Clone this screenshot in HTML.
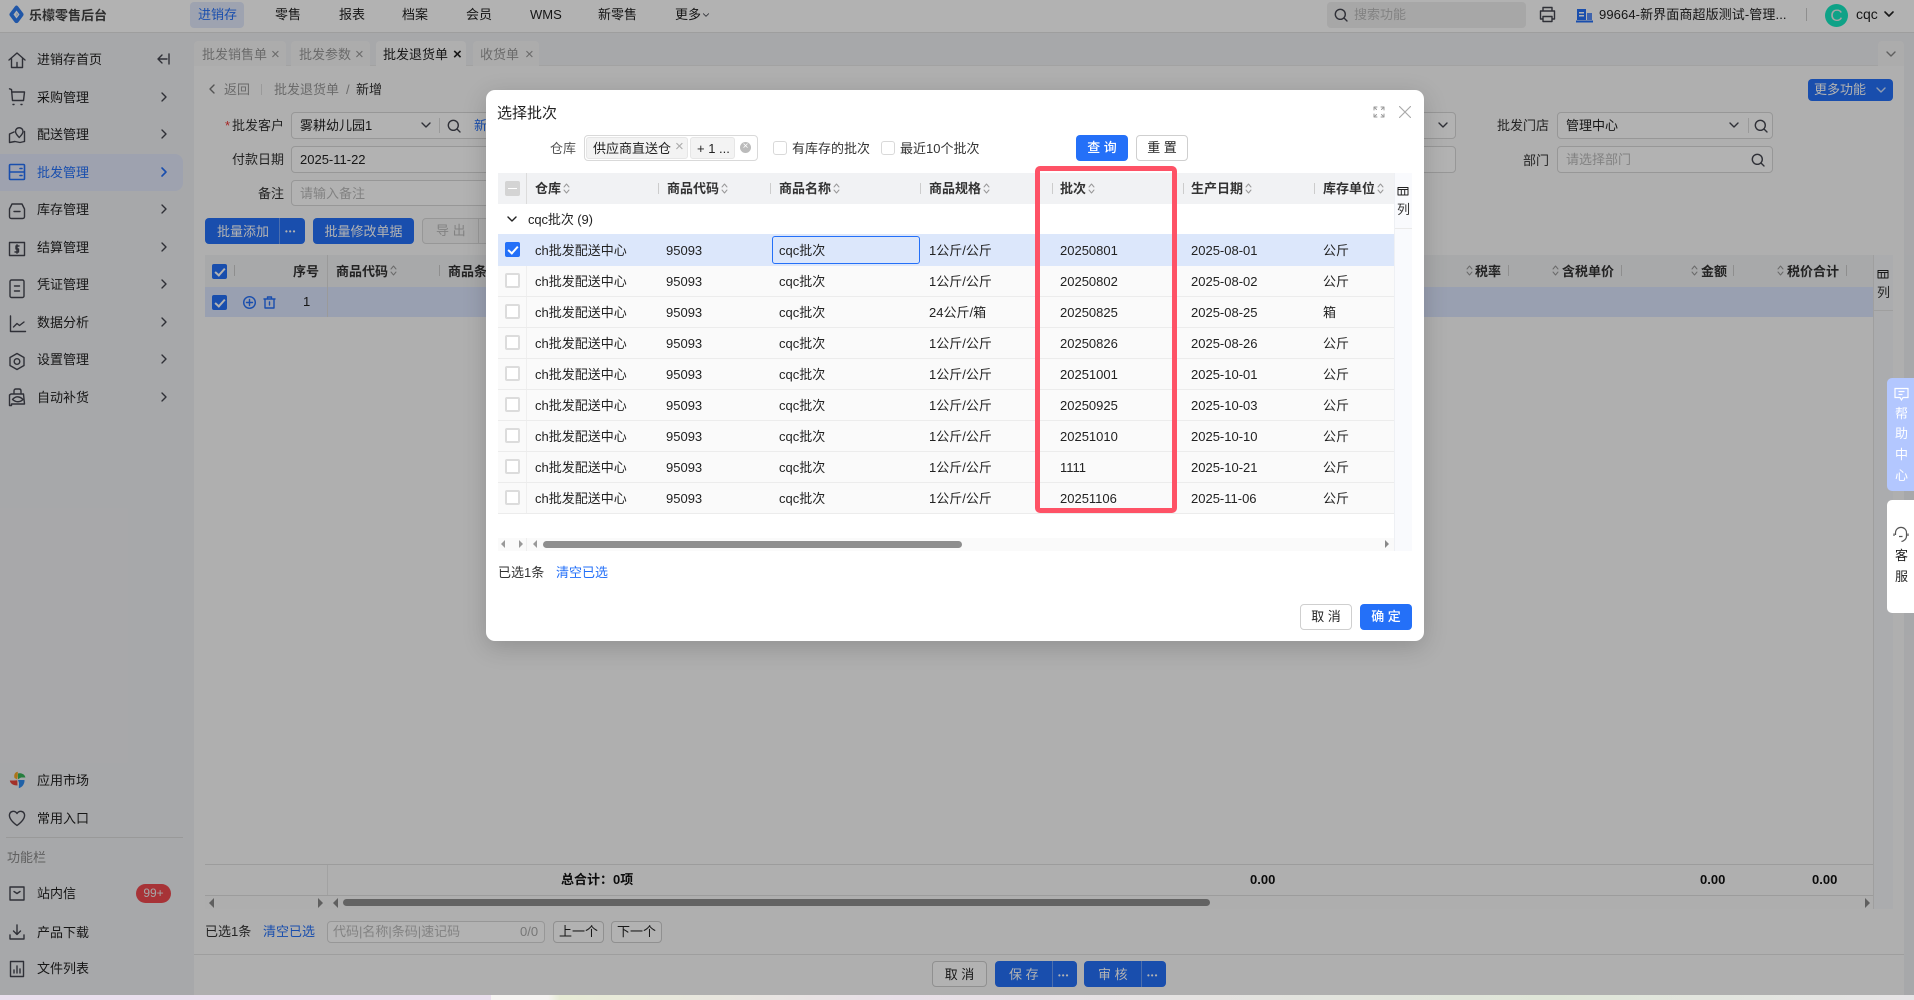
<!DOCTYPE html>
<html lang="zh"><head><meta charset="utf-8"><title>选择批次</title>
<style>
*{box-sizing:border-box}
html,body{margin:0;padding:0;width:1914px;height:1000px;overflow:hidden;background:#fff;font-family:"Liberation Sans","Noto Sans CJK SC",sans-serif;font-size:13px;color:#222}
.a,.t,svg.i{position:absolute}
.t{white-space:nowrap;line-height:20px;font-size:13px;margin-top:1px}
.b{font-weight:700}
.g{color:#999}.l{color:#333}.u{color:#2470f8}.w{color:#fff}
svg.i{fill:none;stroke:#444650;stroke-width:1.4;stroke-linecap:round;stroke-linejoin:round}
svg.s{stroke:#999;stroke-width:1}
svg.ub{stroke:#2470f8}
.inp{position:absolute;background:#fff;border:1px solid #d9d9d9;border-radius:4px}
.btn{position:absolute;border-radius:4px;text-align:center;line-height:24px;white-space:nowrap;font-size:13px}
.pri{background:#2470f8;color:#fff;line-height:26px}
.def{background:#fff;border:1px solid #cfcfcf;color:#222}
.cb{position:absolute;width:15px;height:15px;border:2px solid #dcdcdc;border-radius:2px;background:#fff}
.cc{position:absolute;width:15px;height:15px;border-radius:2px;background:#2470f8}
.cc:after{content:"";position:absolute;left:5px;top:1.5px;width:4px;height:8px;border:solid #fff;border-width:0 2px 2px 0;transform:rotate(42deg)}
.sep{position:absolute;width:1px;height:11px;background:#ccc}
.row{position:absolute;left:498px;width:896px;background:#fafafa;border-bottom:1px solid #ececec}
.row .t{top:5px}
.row .cb,.row .cc{left:7px;top:7px}
.row i{position:absolute;left:28px;top:0;bottom:0;width:1px;background:#efefef}
.tab{position:absolute;top:41px;height:25px;background:#f6f6f6;border-radius:4px 4px 0 0}
#mask{position:absolute;left:0;top:0;width:1914px;height:995px;background:rgba(0,0,0,.3);z-index:2}
#bg{position:absolute;left:0;top:0;width:1914px;height:995px;background:#fbfbfb;z-index:1;overflow:hidden}
#dlg{position:absolute;left:0;top:0;z-index:3}
</style></head><body>
<svg width="0" height="0" style="position:absolute"><defs>
<symbol id="so" viewBox="0 0 7 13"><path d="M1 5L3.5 2L6 5M1 8L3.5 11L6 8"/></symbol>
<symbol id="ar" viewBox="0 0 8 12"><path d="M2 2L6 6L2 10"/></symbol>
<symbol id="dn" viewBox="0 0 12 8"><path d="M2 2L6 6L10 2"/></symbol>
<symbol id="se" viewBox="0 0 14 14"><circle cx="6.3" cy="6.3" r="5"/><path d="M10 10L13 13"/></symbol>
<symbol id="co" viewBox="0 0 12 10"><path d="M1 1.5H11V9H1ZM1 3.5H11M4.3 3.5V9M7.7 3.5V9" /></symbol>
</defs></svg>

<div id="bg">
<!-- top bar -->
<div class="a" style="left:0;top:0;width:1914px;height:33px;background:#fff;border-bottom:1px solid #e2e2e2"></div>
<svg class="a" style="left:9px;top:5px" width="15" height="19" viewBox="0 0 15 19"><path d="M7.500 .5C8.500 .5 9 1.500 9.500 2L14 8C14.800 9 14.800 10 14 11L9.500 17C8.500 18.500 6.500 18.500 5.500 17L1 11C.2 10 .2 9 1 8L5.500 2C6 1.500 6.500 .5 7.500 .5Z" fill="#2f7cf0"/><path d="M7.500 5.500L10.500 9.500L7.500 13.500L4.500 9.500Z" fill="#fff"/><path d="M7.500 7.500L9 9.500L7.500 11.500Z" fill="#9ec4ff"/></svg>
<div class="t b" style="left:29px;top:5px;color:#444">乐檬零售后台</div>
<div class="a" style="left:190px;top:2px;width:54px;height:26px;background:#e3eafd;border-radius:4px"></div>
<div class="t u" style="left:198px;top:4px">进销存</div>
<div class="t" style="left:275px;top:4px">零售</div>
<div class="t" style="left:339px;top:4px">报表</div>
<div class="t" style="left:402px;top:4px">档案</div>
<div class="t" style="left:466px;top:4px">会员</div>
<div class="t" style="left:530px;top:4px">WMS</div>
<div class="t" style="left:598px;top:4px">新零售</div>
<div class="t" style="left:675px;top:4px">更多</div>
<svg class="i" style="left:702px;top:12px;stroke-width:1.2" width="8" height="6"><use href="#dn"/></svg>
<div class="a" style="left:1327px;top:2px;width:199px;height:26px;background:#f0f0f0;border-radius:4px"></div>
<svg class="i" style="left:1334px;top:8px" width="14" height="14"><use href="#se"/></svg>
<div class="t g" style="left:1354px;top:4px;color:#bbb">搜索功能</div>
<svg class="i" style="left:1539px;top:6px" width="17" height="17" viewBox="0 0 17 17"><path d="M4 5V1.5H13V5M4 13H1.5V5H15.500V13H13M4 10.500H13V15.500H4Z"/></svg>
<svg class="a" style="left:1576px;top:8px" width="17" height="15" viewBox="0 0 17 15"><rect x="1" y="1" width="9" height="11" fill="#2470f8"/><rect x="11" y="5" width="5" height="7" fill="#5a8ff8"/><rect x="0" y="12.500" width="17" height="2" fill="#2470f8"/><rect x="3" y="4" width="5" height="1.500" fill="#fff"/><rect x="3" y="7" width="5" height="1.500" fill="#fff"/></svg>
<div class="t" style="left:1599px;top:4px;letter-spacing:.1px">99664-新界面商超版测试-管理...</div>
<div class="a" style="left:1806px;top:8px;width:1px;height:13px;background:#ccc"></div>
<div class="a" style="left:1825px;top:4px;width:23px;height:23px;border-radius:50%;background:#16e8c2;color:#eee;text-align:center;line-height:23px;font-size:17px">C</div>
<div class="t" style="left:1856px;top:3px;font-size:14px">cqc</div>
<svg class="i" style="left:1883px;top:10px;stroke:#222;stroke-width:1.6" width="12" height="8"><use href="#dn"/></svg>

<!-- sidebar -->
<div class="a" style="left:0;top:33px;width:194px;height:962px;background:#f0f1f4"></div>
<div class="a" style="left:0;top:154px;width:183px;height:37px;background:#e2e9fb;border-radius:0 8px 8px 0"></div>
<div class="t" style="left:37px;top:49px">进销存首页</div>
<div class="t" style="left:37px;top:87px">采购管理</div>
<div class="t" style="left:37px;top:124px">配送管理</div>
<div class="t u" style="left:37px;top:162px">批发管理</div>
<div class="t" style="left:37px;top:199px">库存管理</div>
<div class="t" style="left:37px;top:237px">结算管理</div>
<div class="t" style="left:37px;top:274px">凭证管理</div>
<div class="t" style="left:37px;top:312px">数据分析</div>
<div class="t" style="left:37px;top:349px">设置管理</div>
<div class="t" style="left:37px;top:387px">自动补货</div>
<svg class="i" style="left:8px;top:51px" width="18" height="18" viewBox="0 0 18 18"><path d="M1 9L9 2L17 9M3.500 7.500V16.500H14.500V7.500M9 11.500V16.500"/></svg>
<svg class="i" style="left:8px;top:88px" width="18" height="18" viewBox="0 0 18 18"><path d="M1.500 .8L3.500 1.500L4.500 12.500H15.500L16.500 4H4"/><path d="M5 16.500H6M13 16.500H14"/></svg>
<svg class="i" style="left:8px;top:126px" width="18" height="18" viewBox="0 0 18 18"><path d="M6 6L1.500 8V16.500L7 15.500L12 16.500L16.500 15.500V5.500M7.500 5.500C7.500 .5 15 .5 15 5.500C15 8 12.500 10 11.200 11.500C10 10 7.500 8 7.500 5.500Z"/></svg>
<svg class="i ub" style="left:8px;top:163px;stroke-width:1.600" width="18" height="18" viewBox="0 0 18 18"><path d="M2.500 1.500H15.500Q16.500 1.500 16.500 2.500V15.500Q16.500 16.500 15.500 16.500H2.500Q1.500 16.500 1.500 15.500V2.500Q1.500 1.500 2.500 1.500ZM1.500 9H16.500M12 5.500H14M12 12.500H14"/></svg>
<svg class="i" style="left:8px;top:202px" width="18" height="18" viewBox="0 0 18 18"><path d="M4 2H14L16.500 7V14.500Q16.500 16.500 14.500 16.500H3.500Q1.500 16.500 1.500 14.500V7ZM6 9.500H12"/></svg>
<svg class="i" style="left:8px;top:240px" width="18" height="18" viewBox="0 0 18 18"><path d="M1.500 2.500H16.500V15.500H1.500ZM11 6H8V9H10.500V12H7M9 4.800V13.200"/></svg>
<svg class="i" style="left:8px;top:279px" width="18" height="20" viewBox="0 0 18 20"><rect x="2" y="1" width="14" height="17.500" rx="1.500"/><path d="M6.500 7H11.500M6.500 12H11.500"/></svg>
<svg class="i" style="left:9px;top:315px" width="18" height="18" viewBox="0 0 18 18"><path d="M1.500 1V16.500H16.500M4.500 12L8 8.500L10.500 10.500L15 7"/></svg>
<svg class="i" style="left:8px;top:352px" width="18" height="19" viewBox="0 0 18 19"><path d="M9 1.500L16 5.500V13.500L9 17.500L2 13.500V5.500Z"/><circle cx="9" cy="9.500" r="2.800"/></svg>
<svg class="i" style="left:8px;top:388px" width="18" height="19" viewBox="0 0 18 19"><path d="M3 6H15.500L16.500 16H3.500V17.500H1.500V7ZM6 6V3Q6 1 8 1H11Q13 1 13 3V6M4.500 11.500C8 7.500 12 8.500 15 11.500C12 14.500 8 14.500 4.500 11.500Z"/></svg>
<svg class="i" style="left:156px;top:53px" width="14" height="12" viewBox="0 0 14 12"><path d="M13 1V11M11 6H2M6 2L2 6L6 10"/></svg>
<svg class="i" style="left:160px;top:91px" width="8" height="12"><use href="#ar"/></svg>
<svg class="i" style="left:160px;top:128px" width="8" height="12"><use href="#ar"/></svg>
<svg class="i ub" style="left:160px;top:166px;stroke-width:1.6" width="8" height="12"><use href="#ar"/></svg>
<svg class="i" style="left:160px;top:203px" width="8" height="12"><use href="#ar"/></svg>
<svg class="i" style="left:160px;top:241px" width="8" height="12"><use href="#ar"/></svg>
<svg class="i" style="left:160px;top:278px" width="8" height="12"><use href="#ar"/></svg>
<svg class="i" style="left:160px;top:316px" width="8" height="12"><use href="#ar"/></svg>
<svg class="i" style="left:160px;top:353px" width="8" height="12"><use href="#ar"/></svg>
<svg class="i" style="left:160px;top:391px" width="8" height="12"><use href="#ar"/></svg>

<div class="t" style="left:37px;top:770px">应用市场</div>
<div class="t" style="left:37px;top:808px">常用入口</div>
<div class="a" style="left:6px;top:837px;width:177px;height:1px;background:#dcdcdc"></div>
<div class="t" style="left:7px;top:847px;color:#888">功能栏</div>
<div class="t" style="left:37px;top:883px">站内信</div>
<div class="t" style="left:37px;top:922px">产品下载</div>
<div class="t" style="left:37px;top:958px">文件列表</div>
<svg class="a" style="left:9px;top:771px" width="17" height="18" viewBox="0 0 17 18"><path d="M8.200 8.500L5.500 7C4.500 4 6 1 8.800 .8L8.800 5Z" fill="#f5a623"/><path d="M9 8.300V2.500C12 1.800 15.800 3 16.400 6.500L12 6.500Z" fill="#35b558"/><path d="M9 9H15.500C15.800 13 13 16.500 9.800 17.200L10 12Z" fill="#2e8cf0"/><path d="M8.300 9.300L8.500 14.500C5 14.500 1.300 13 .8 9.500L5 9.500Z" fill="#e8453c"/></svg>
<svg class="i" style="left:8px;top:809px" width="18" height="18" viewBox="0 0 18 18"><path d="M9 16.500C3 12 1 8.500 1.500 5.500C2.500 1.500 7 1.500 9 4.500C11 1.500 15.500 1.500 16.500 5.500C17 8.500 15 12 9 16.500Z"/></svg>
<svg class="i" style="left:8px;top:884px" width="18" height="18" viewBox="0 0 18 18"><path d="M2 3H16V16H2ZM6 7.500L9 9.500L12 7.500"/></svg>
<svg class="i" style="left:8px;top:923px" width="18" height="18" viewBox="0 0 18 18"><path d="M9 2V11M5.500 8L9 11.500L12.500 8M2 12V16H16V12"/></svg>
<svg class="i" style="left:8px;top:960px" width="18" height="18" viewBox="0 0 18 18"><path d="M2.500 1.500H15.500V16.500H2.500ZM6 13V10M9 13V6M12 13V9"/></svg>
<div class="a" style="left:136px;top:884px;width:35px;height:19px;border-radius:10px;background:#f04a50;color:#eee;text-align:center;line-height:19px;font-size:12px">99+</div>

<!-- tabs -->
<div class="a" style="left:194px;top:33px;width:1720px;height:33px;background:#f0f1f4"></div>
<div class="a" style="left:1904px;top:66px;width:10px;height:929px;background:#f0f1f4"></div>
<div class="a" style="left:194px;top:65px;width:1710px;height:1px;background:#e8e8e8"></div>
<div class="tab" style="left:194px;width:92px"></div>
<div class="tab" style="left:291px;width:79px"></div>
<div class="tab" style="left:376px;width:90px;background:#fbfbfb;height:26px"></div>
<div class="tab" style="left:473px;width:66px"></div>
<div class="tab" style="left:1878px;width:26px"></div>
<div class="t" style="left:202px;top:44px;color:#999">批发销售单</div>
<div class="t" style="left:271px;top:44px;color:#999;font-size:15px">×</div>
<div class="t" style="left:299px;top:44px;color:#999">批发参数</div>
<div class="t" style="left:355px;top:44px;color:#999;font-size:15px">×</div>
<div class="t" style="left:383px;top:44px">批发退货单</div>
<div class="t b" style="left:453px;top:44px;font-size:15px">×</div>
<div class="t" style="left:480px;top:44px;color:#999">收货单</div>
<div class="t" style="left:525px;top:44px;color:#999;font-size:15px">×</div>
<svg class="i" style="left:1885px;top:50px;stroke:#888" width="12" height="8"><use href="#dn"/></svg>

<!-- breadcrumb & form -->
<svg class="i" style="left:208px;top:83px;stroke:#777" width="8" height="12" viewBox="0 0 8 12"><path d="M6 2L2 6L6 10"/></svg>
<div class="t g" style="left:224px;top:79px">返回</div>
<div class="a" style="left:261px;top:84px;width:1px;height:11px;background:#ddd"></div>
<div class="t g" style="left:274px;top:79px">批发退货单</div>
<div class="t g" style="left:346px;top:79px">/</div>
<div class="t l" style="left:356px;top:79px">新增</div>
<div class="t" style="left:225px;top:115px;color:#e33">*</div>
<div class="t l" style="left:232px;top:115px">批发客户</div>
<div class="t l" style="left:232px;top:149px">付款日期</div>
<div class="t l" style="left:258px;top:183px">备注</div>
<div class="inp" style="left:291px;top:112px;width:220px;height:27px"></div>
<div class="t" style="left:300px;top:115px">雾耕幼儿园1</div>
<svg class="i" style="left:420px;top:121px" width="12" height="8"><use href="#dn"/></svg>
<div class="a" style="left:439px;top:118px;width:1px;height:15px;background:#ddd"></div>
<svg class="i" style="left:447px;top:119px" width="14" height="14"><use href="#se"/></svg>
<div class="t u" style="left:474px;top:115px">新增</div>
<div class="inp" style="left:291px;top:146px;width:1165px;height:27px"></div>
<div class="t" style="left:300px;top:149px">2025-11-22</div>
<div class="inp" style="left:291px;top:180px;width:300px;height:26px"></div>
<div class="t" style="left:300px;top:183px;color:#bbb">请输入备注</div>
<div class="inp" style="left:1000px;top:112px;width:456px;height:27px"></div>
<svg class="i" style="left:1437px;top:121px" width="12" height="8"><use href="#dn"/></svg>

<div class="t l" style="left:1497px;top:115px">批发门店</div>
<div class="t l" style="left:1523px;top:150px">部门</div>
<div class="inp" style="left:1557px;top:112px;width:216px;height:27px"></div>
<div class="t" style="left:1566px;top:115px">管理中心</div>
<svg class="i" style="left:1728px;top:121px" width="12" height="8"><use href="#dn"/></svg>
<div class="a" style="left:1748px;top:118px;width:1px;height:15px;background:#ddd"></div>
<svg class="i" style="left:1754px;top:119px" width="14" height="14"><use href="#se"/></svg>
<div class="inp" style="left:1557px;top:146px;width:216px;height:27px"></div>
<div class="t" style="left:1566px;top:149px;color:#bbb">请选择部门</div>
<svg class="i" style="left:1751px;top:153px" width="14" height="14"><use href="#se"/></svg>
<div class="btn pri" style="left:1808px;top:79px;width:85px;height:22px;line-height:22px;text-align:left;padding-left:6px">更多功能</div>
<svg class="i" style="left:1875px;top:86px;stroke:#cfe0ff" width="12" height="8"><use href="#dn"/></svg>

<!-- toolbar -->
<div class="btn pri" style="left:205px;top:218px;width:100px;height:26px;text-align:left;padding-left:12px;line-height:27px">批量添加</div>
<div class="a" style="left:279px;top:218px;width:1px;height:26px;background:#6d9ffa"></div>
<div class="t w" style="left:285px;top:228px;line-height:6px;font-size:8px;letter-spacing:1px">•••</div>
<div class="btn pri" style="left:313px;top:218px;width:101px;height:26px;line-height:27px">批量修改单据</div>
<div class="btn" style="left:422px;top:218px;width:70px;height:26px;border:1px solid #d9d9d9;background:#f5f5f5;color:#bbb;text-align:left;padding-left:13px">导 出</div>
<div class="a" style="left:478px;top:218px;width:1px;height:26px;background:#d9d9d9"></div>

<!-- main table -->
<div class="a" style="left:205px;top:255px;width:1668px;height:32px;background:#f1f2f4"></div>
<div class="a" style="left:205px;top:287px;width:1668px;height:30px;background:#dce5fe"></div>
<div class="a" style="left:327px;top:255px;width:1px;height:62px;background:#ddd"></div>
<div class="cc" style="left:212px;top:264px"></div>
<div class="sep" style="left:234px;top:265px"></div>
<div class="t b l" style="left:293px;top:261px">序号</div>
<div class="t b l" style="left:336px;top:261px">商品代码</div>
<svg class="i s" style="left:390px;top:264px" width="7" height="13"><use href="#so"/></svg>
<div class="sep" style="left:439px;top:265px"></div>
<div class="t b l" style="left:448px;top:261px">商品条码</div>
<div class="cc" style="left:212px;top:295px"></div>
<svg class="i ub" style="left:243px;top:296px" width="13" height="13" viewBox="0 0 13 13"><circle cx="6.500" cy="6.500" r="5.800"/><path d="M6.500 3.500V9.500M3.500 6.500H9.500"/></svg>
<svg class="i ub" style="left:263px;top:296px" width="13" height="13" viewBox="0 0 13 13"><path d="M1 3H12M4.500 3V1H8.500V3M2 3V12H11V3M6.500 6V9"/></svg>
<div class="t" style="left:303px;top:291px">1</div>
<svg class="i s" style="left:1466px;top:264px" width="7" height="13"><use href="#so"/></svg>
<div class="t b l" style="left:1475px;top:261px">税率</div>
<div class="sep" style="left:1508px;top:265px"></div>
<svg class="i s" style="left:1552px;top:264px" width="7" height="13"><use href="#so"/></svg>
<div class="t b l" style="left:1562px;top:261px">含税单价</div>
<div class="sep" style="left:1621px;top:265px"></div>
<svg class="i s" style="left:1691px;top:264px" width="7" height="13"><use href="#so"/></svg>
<div class="t b l" style="left:1701px;top:261px">金额</div>
<div class="sep" style="left:1733px;top:265px"></div>
<svg class="i s" style="left:1777px;top:264px" width="7" height="13"><use href="#so"/></svg>
<div class="t b l" style="left:1787px;top:261px">税价合计</div>
<div class="sep" style="left:1846px;top:265px"></div>
<div class="a" style="left:1873px;top:255px;width:20px;height:654px;background:#f5f6f9;border-left:1px solid #e4e4e4"></div>
<svg class="i" style="left:1877px;top:269px;stroke:#222;stroke-width:1" width="12" height="10"><use href="#co"/></svg>
<div class="t l" style="left:1877px;top:282px">列</div>
<div class="a" style="left:1874px;top:310px;width:19px;height:1px;background:#e4e4e4"></div>
<!-- summary -->
<div class="a" style="left:205px;top:864px;width:1668px;height:1px;background:#e0e0e0"></div>
<div class="a" style="left:327px;top:865px;width:1px;height:44px;background:#e8e8e8"></div>
<div class="a" style="left:205px;top:895px;width:1668px;height:1px;background:#e0e0e0"></div>
<div class="t b" style="left:561px;top:869px;color:#111">总合计：0项</div>
<div class="t b" style="left:1250px;top:869px;color:#111">0.00</div>
<div class="t b" style="left:1700px;top:869px;color:#111">0.00</div>
<div class="t b" style="left:1812px;top:869px;color:#111">0.00</div>
<div class="a" style="left:205px;top:896px;width:1668px;height:13px;background:#f9f9f9"></div>
<div class="a" style="left:343px;top:899px;width:867px;height:7px;border-radius:4px;background:#8f8f8f"></div>
<svg class="a" style="left:209px;top:898px" width="6" height="10"><path d="M5 0V10L0 5Z" fill="#888"/></svg>
<svg class="a" style="left:318px;top:898px" width="6" height="10"><path d="M0 0V10L5 5Z" fill="#888"/></svg>
<svg class="a" style="left:333px;top:898px" width="6" height="10"><path d="M5 0V10L0 5Z" fill="#888"/></svg>
<svg class="a" style="left:1865px;top:898px" width="6" height="10"><path d="M0 0V10L5 5Z" fill="#888"/></svg>
<!-- bottom -->
<div class="t l" style="left:205px;top:921px">已选1条</div>
<div class="t u" style="left:263px;top:921px">清空已选</div>
<div class="inp" style="left:327px;top:921px;width:218px;height:22px"></div>
<div class="t" style="left:333px;top:921px;color:#bbb">代码|名称|条码|速记码</div>
<div class="t" style="left:520px;top:921px;color:#aaa">0/0</div>
<div class="btn def" style="left:553px;top:921px;width:51px;height:22px;line-height:20px">上一个</div>
<div class="btn def" style="left:611px;top:921px;width:51px;height:22px;line-height:20px">下一个</div>
<div class="a" style="left:194px;top:954px;width:1710px;height:1px;background:#e2e2e2"></div>
<div class="btn def" style="left:932px;top:961px;width:55px;height:26px;line-height:26px">取 消</div>
<div class="btn pri" style="left:995px;top:961px;width:82px;height:26px;text-align:left;padding-left:14px;line-height:27px">保 存</div>
<div class="a" style="left:1052px;top:961px;width:1px;height:26px;background:#6d9ffa"></div>
<div class="t w" style="left:1058px;top:972px;line-height:6px;font-size:8px;letter-spacing:1px">•••</div>
<div class="btn pri" style="left:1084px;top:961px;width:82px;height:26px;text-align:left;padding-left:14px;line-height:27px">审 核</div>
<div class="a" style="left:1141px;top:961px;width:1px;height:26px;background:#6d9ffa"></div>
<div class="t w" style="left:1147px;top:972px;line-height:6px;font-size:8px;letter-spacing:1px">•••</div>
</div>

<div id="mask"></div>
<div class="a" style="left:0;top:995px;width:1914px;height:5px;background:linear-gradient(90deg,#eadfee 0,#eadfee 491px,#f6f4f2 491px,#f6f4f2 548px,#e8ecd6 560px,#e8dfe8 900px,#dfe6d8 1550px,#e6e4e6 1914px)"></div>

<div id="dlg">
<div class="a" style="left:486px;top:90px;width:938px;height:551px;background:#fff;border-radius:9px;box-shadow:0 6px 24px rgba(0,0,0,.18)"></div>
<div class="t" style="left:497px;top:103px;font-size:15px">选择批次</div>
<svg class="i" style="left:1373px;top:106px;stroke:#999;stroke-width:1" width="12" height="12" viewBox="0 0 12 12"><path d="M1 4V1H4M8 1H11V4M11 8V11H8M4 11H1V8M1 1L3.500 3.500M11 1L8.500 3.500M11 11L8.500 8.500M1 11L3.500 8.500"/></svg>
<svg class="i" style="left:1399px;top:106px;stroke:#aaa;stroke-width:1.2" width="12" height="12" viewBox="0 0 12 12"><path d="M.5 .5L11.500 11.500M11.500 .5L.5 11.500"/></svg>
<!-- filter -->
<div class="t" style="left:550px;top:138px;color:#555">仓库</div>
<div class="inp" style="left:584px;top:135px;width:174px;height:26px"></div>
<div class="a" style="left:586px;top:137px;width:102px;height:22px;background:#f3f3f3;border:1px solid #e6e6e6;border-radius:3px"></div>
<div class="t" style="left:593px;top:138px">供应商直送仓</div>
<div class="t" style="left:675px;top:136px;color:#aaa;font-size:15px">×</div>
<div class="a" style="left:690px;top:137px;width:45px;height:22px;background:#f3f3f3;border:1px solid #e6e6e6;border-radius:3px"></div>
<div class="t" style="left:697px;top:138px">+ 1 ...</div>
<div class="a" style="left:740px;top:142px;width:11px;height:11px;border-radius:50%;background:#bbb;color:#fff;font-size:10px;line-height:10px;text-align:center">×</div>
<div class="a" style="left:773px;top:141px;width:14px;height:14px;border:1px solid #d9d9d9;border-radius:3px"></div>
<div class="t" style="left:792px;top:138px;color:#333">有库存的批次</div>
<div class="a" style="left:881px;top:141px;width:14px;height:14px;border:1px solid #d9d9d9;border-radius:3px"></div>
<div class="t" style="left:900px;top:138px;color:#333">最近10个批次</div>
<div class="btn pri" style="left:1076px;top:135px;width:52px;height:26px;font-weight:500">查 询</div>
<div class="btn def" style="left:1136px;top:135px;width:52px;height:26px">重 置</div>
<!-- table header -->
<div class="a" style="left:498px;top:173px;width:896px;height:31px;background:#f1f2f4"></div>
<div class="a" style="left:526px;top:173px;width:1px;height:31px;background:#dcdcdc"></div>
<div class="a" style="left:505px;top:181px;width:15px;height:15px;border-radius:2px;background:#d4d4d4"><div class="a" style="left:3px;top:7px;width:9px;height:1px;background:#fff"></div></div>
<div class="t b l" style="left:535px;top:178px">仓库</div><svg class="i s" style="left:563px;top:182px" width="7" height="13"><use href="#so"/></svg>
<div class="sep" style="left:658px;top:183px"></div>
<div class="t b l" style="left:667px;top:178px">商品代码</div><svg class="i s" style="left:721px;top:182px" width="7" height="13"><use href="#so"/></svg>
<div class="sep" style="left:770px;top:183px"></div>
<div class="t b l" style="left:779px;top:178px">商品名称</div><svg class="i s" style="left:833px;top:182px" width="7" height="13"><use href="#so"/></svg>
<div class="sep" style="left:920px;top:183px"></div>
<div class="t b l" style="left:929px;top:178px">商品规格</div><svg class="i s" style="left:983px;top:182px" width="7" height="13"><use href="#so"/></svg>
<div class="sep" style="left:1052px;top:183px"></div>
<div class="t b l" style="left:1060px;top:178px">批次</div><svg class="i s" style="left:1088px;top:182px" width="7" height="13"><use href="#so"/></svg>
<div class="sep" style="left:1183px;top:183px"></div>
<div class="t b l" style="left:1191px;top:178px">生产日期</div><svg class="i s" style="left:1245px;top:182px" width="7" height="13"><use href="#so"/></svg>
<div class="sep" style="left:1314px;top:183px"></div>
<div class="t b l" style="left:1323px;top:178px">库存单位</div><svg class="i s" style="left:1377px;top:182px" width="7" height="13"><use href="#so"/></svg>
<!-- column strip -->
<div class="a" style="left:1394px;top:173px;width:18px;height:378px;background:#f9fafd;border-left:1px solid #eef0f4"></div>
<svg class="i" style="left:1397px;top:186px;stroke:#222;stroke-width:1" width="12" height="10"><use href="#co"/></svg>
<div class="t l" style="left:1397px;top:199px">列</div>
<div class="a" style="left:1395px;top:228px;width:17px;height:1px;background:#eaeaea"></div>
<!-- group -->
<svg class="i" style="left:506px;top:215px;stroke:#222" width="12" height="8"><use href="#dn"/></svg>
<div class="t" style="left:528px;top:209px;letter-spacing:-.1px">cqc批次 (9)</div>
<!-- rows -->
<div class="row" style="top:234px;height:32px;background:#dce7fb;border-bottom:0"><div class="cc" style="top:8px"></div><span class="t" style="left:37px;top:6px">ch批发配送中心</span><span class="t" style="left:168px;top:6px">95093</span><span class="t" style="left:431px;top:6px">1公斤/公斤</span><span class="t" style="left:562px;top:6px">20250801</span><span class="t" style="left:693px;top:6px">2025-08-01</span><span class="t" style="left:825px;top:6px">公斤</span></div>
<div class="a" style="left:772px;top:236px;width:148px;height:28px;border:1px solid #2470f8;border-radius:3px"></div>
<div class="t" style="left:779px;top:240px">cqc批次</div>
<div class="row" style="top:266px;height:31px"><i></i><div class="cb"></div><span class="t" style="left:37px">ch批发配送中心</span><span class="t" style="left:168px">95093</span><span class="t" style="left:281px">cqc批次</span><span class="t" style="left:431px">1公斤/公斤</span><span class="t" style="left:562px">20250802</span><span class="t" style="left:693px">2025-08-02</span><span class="t" style="left:825px">公斤</span></div>
<div class="row" style="top:297px;height:31px"><i></i><div class="cb"></div><span class="t" style="left:37px">ch批发配送中心</span><span class="t" style="left:168px">95093</span><span class="t" style="left:281px">cqc批次</span><span class="t" style="left:431px">24公斤/箱</span><span class="t" style="left:562px">20250825</span><span class="t" style="left:693px">2025-08-25</span><span class="t" style="left:825px">箱</span></div>
<div class="row" style="top:328px;height:31px"><i></i><div class="cb"></div><span class="t" style="left:37px">ch批发配送中心</span><span class="t" style="left:168px">95093</span><span class="t" style="left:281px">cqc批次</span><span class="t" style="left:431px">1公斤/公斤</span><span class="t" style="left:562px">20250826</span><span class="t" style="left:693px">2025-08-26</span><span class="t" style="left:825px">公斤</span></div>
<div class="row" style="top:359px;height:31px"><i></i><div class="cb"></div><span class="t" style="left:37px">ch批发配送中心</span><span class="t" style="left:168px">95093</span><span class="t" style="left:281px">cqc批次</span><span class="t" style="left:431px">1公斤/公斤</span><span class="t" style="left:562px">20251001</span><span class="t" style="left:693px">2025-10-01</span><span class="t" style="left:825px">公斤</span></div>
<div class="row" style="top:390px;height:31px"><i></i><div class="cb"></div><span class="t" style="left:37px">ch批发配送中心</span><span class="t" style="left:168px">95093</span><span class="t" style="left:281px">cqc批次</span><span class="t" style="left:431px">1公斤/公斤</span><span class="t" style="left:562px">20250925</span><span class="t" style="left:693px">2025-10-03</span><span class="t" style="left:825px">公斤</span></div>
<div class="row" style="top:421px;height:31px"><i></i><div class="cb"></div><span class="t" style="left:37px">ch批发配送中心</span><span class="t" style="left:168px">95093</span><span class="t" style="left:281px">cqc批次</span><span class="t" style="left:431px">1公斤/公斤</span><span class="t" style="left:562px">20251010</span><span class="t" style="left:693px">2025-10-10</span><span class="t" style="left:825px">公斤</span></div>
<div class="row" style="top:452px;height:31px"><i></i><div class="cb"></div><span class="t" style="left:37px">ch批发配送中心</span><span class="t" style="left:168px">95093</span><span class="t" style="left:281px">cqc批次</span><span class="t" style="left:431px">1公斤/公斤</span><span class="t" style="left:562px">1111</span><span class="t" style="left:693px">2025-10-21</span><span class="t" style="left:825px">公斤</span></div>
<div class="row" style="top:483px;height:31px"><i></i><div class="cb"></div><span class="t" style="left:37px">ch批发配送中心</span><span class="t" style="left:168px">95093</span><span class="t" style="left:281px">cqc批次</span><span class="t" style="left:431px">1公斤/公斤</span><span class="t" style="left:562px">20251106</span><span class="t" style="left:693px">2025-11-06</span><span class="t" style="left:825px">公斤</span></div>
<!-- scroll -->
<div class="a" style="left:498px;top:538px;width:896px;height:13px;background:#fafafa"></div>
<div class="a" style="left:526px;top:538px;width:1px;height:13px;background:#eee"></div>
<div class="a" style="left:543px;top:541px;width:419px;height:7px;border-radius:4px;background:#8e8e8e"></div>
<svg class="a" style="left:501px;top:540px" width="5" height="8"><path d="M4 0V8L0 4Z" fill="#999"/></svg>
<svg class="a" style="left:519px;top:540px" width="5" height="8"><path d="M0 0V8L4 4Z" fill="#999"/></svg>
<svg class="a" style="left:533px;top:540px" width="5" height="8"><path d="M4 0V8L0 4Z" fill="#999"/></svg>
<svg class="a" style="left:1385px;top:540px" width="5" height="8"><path d="M0 0V8L4 4Z" fill="#888"/></svg>
<!-- red rect -->
<div class="a" style="left:1035px;top:166px;width:142px;height:347px;border:5px solid #fe5266;border-radius:5px"></div>
<!-- footer -->
<div class="t l" style="left:498px;top:562px">已选1条</div>
<div class="t u" style="left:556px;top:562px">清空已选</div>
<div class="btn def" style="left:1300px;top:604px;width:52px;height:26px">取 消</div>
<div class="btn pri" style="left:1360px;top:604px;width:52px;height:26px;font-weight:500">确 定</div>
<!-- floating -->
<div class="a" style="left:1887px;top:378px;width:27px;height:113px;background:#b3c7ff;border-radius:5px 0 0 5px"></div>
<svg class="a" style="left:1894px;top:387px" width="15" height="15" viewBox="0 0 15 15" fill="none" stroke="#fff" stroke-width="1.200"><path d="M1 1.500H14V10.500H9L7.500 13L6 10.500H1ZM4.500 4.500H10.500M4.500 7.500H8.500"/></svg>
<div class="t w" style="left:1895px;top:403px">帮</div>
<div class="t w" style="left:1895px;top:423px">助</div>
<div class="t w" style="left:1895px;top:444px">中</div>
<div class="t w" style="left:1895px;top:465px">心</div>
<div class="a" style="left:1887px;top:500px;width:27px;height:113px;background:#fff;border-radius:5px 0 0 5px"></div>
<svg class="a" style="left:1893px;top:526px" width="16" height="17" viewBox="0 0 16 17" fill="none" stroke="#555" stroke-width="1.200"><path d="M2.500 9V7C2.500 -.5 13.500 -.5 13.500 7V10C13.500 13 11 15 8.500 15.500M1 7.500V10M15 7.500V10M6 10.500H9.500"/></svg>
<div class="t" style="left:1895px;top:545px">客</div>
<div class="t" style="left:1895px;top:566px">服</div>
</div>
</body></html>
